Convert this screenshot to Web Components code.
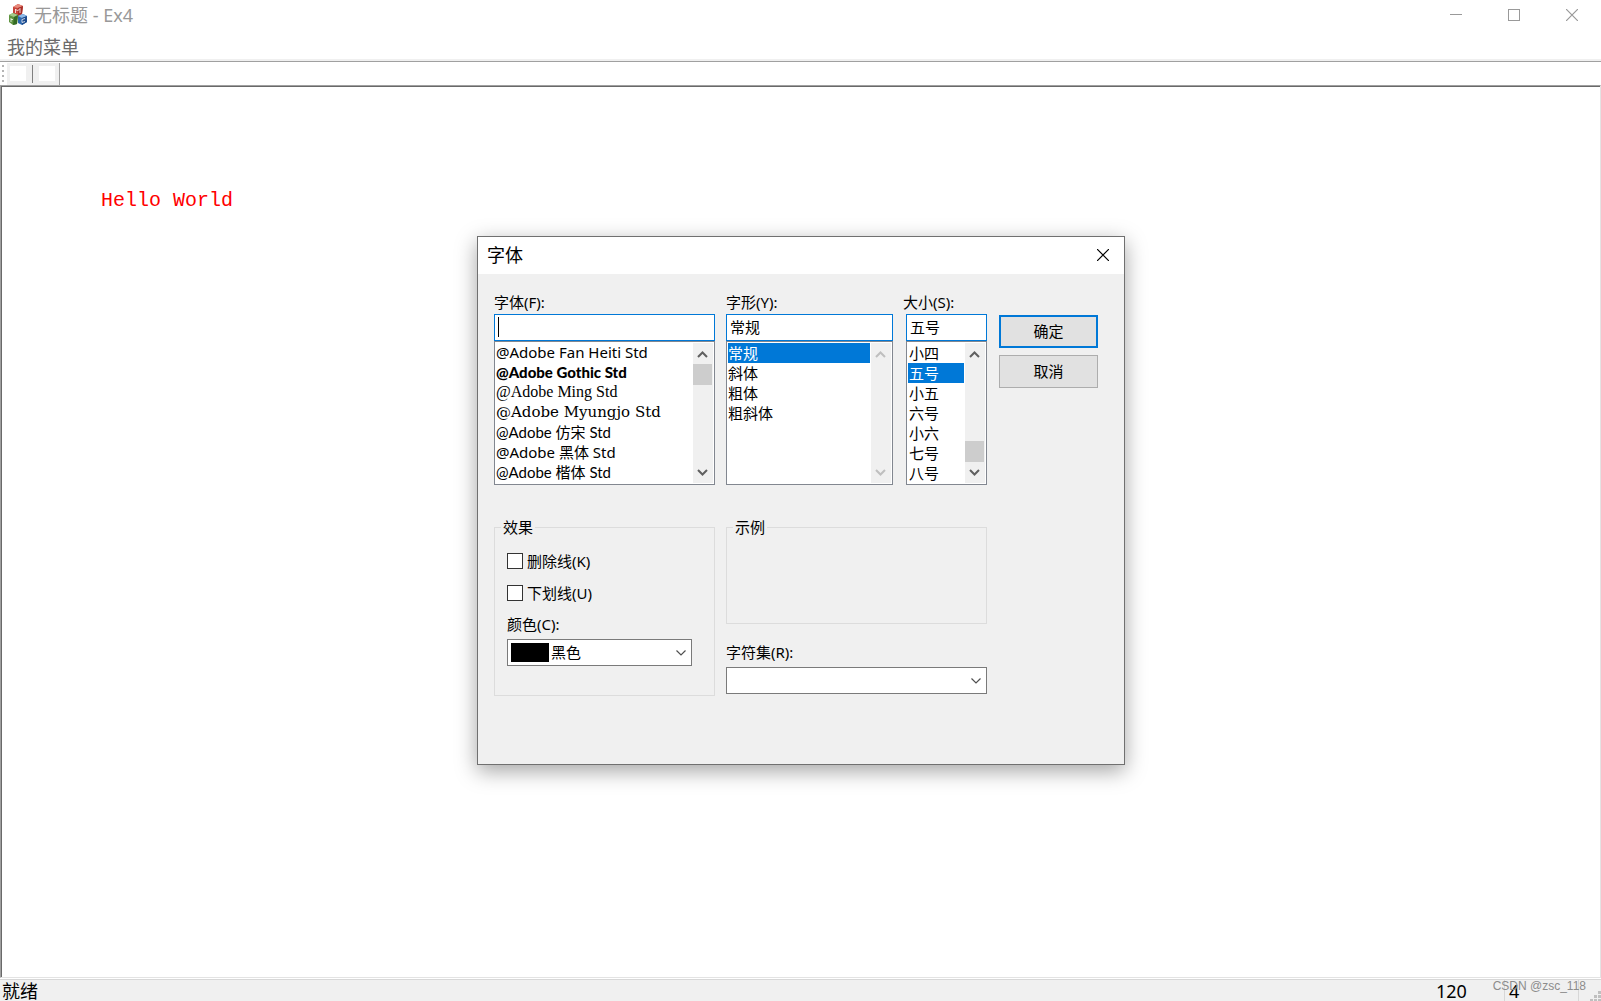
<!DOCTYPE html>
<html lang="zh-CN">
<head>
<meta charset="utf-8">
<title>无标题 - Ex4</title>
<style>
html, body { height: 100%; margin: 0; }
body { font: 15px/20px "Noto Sans", "Noto Sans CJK SC", sans-serif; color: #000; background: #fff; overflow: hidden; }
</style>
</head>
<body>
<app-window></app-window>
<script>
const define = (name, html, setup) => customElements.define(name, class extends HTMLElement {
  connectedCallback() {
    if (this.shadowRoot) return;
    const t = document.createElement('template');
    t.innerHTML = '<style>*{box-sizing:border-box}button,input,select{font:inherit;color:inherit;margin:0;border-radius:0;outline:0}</style>' +
      (typeof html === 'function' ? html(this) : html);
    this.attachShadow({ mode: 'open' }).append(t.content.cloneNode(true));
    if (setup) setup(this);
  }
});

define('title-bar', `
<style>
:host { display: flex; align-items: center; height: 30px; padding-left: 8px; font-size: 18px; line-height: 24px; color: #999; }
.name { flex: 1; padding-left: 6px; }
button { width: 58px; height: 30px; padding: 0; border: 0; background: none; display: grid; place-items: center; }
svg { display: block; }
</style>
<svg width="20" height="22" viewBox="0 0 20 22" aria-hidden="true">
  <path d="M5 3 10 0 15 2 14 10 10 12 5 10Z" fill="#c8443a"/><path d="M5 3 10 0 15 2 10 4Z" fill="#e88a7c"/><path d="M10 4 15 2 14 10 10 12Z" fill="#a82e28"/>
  <path d="M1 11 5 9 10 11 9 20 5 21 1 18Z" fill="#5f9440"/><path d="M1 11 5 9 10 11 6 13Z" fill="#a3c98a"/><path d="M6 13 10 11 9 20 5 21Z" fill="#356b24"/>
  <path d="M10 12 15 10 19 12 19 18 14 21 10 19Z" fill="#2c68b0"/><path d="M10 12 15 10 19 12 14 14Z" fill="#8db9e6"/><path d="M14 14 19 12 19 18 14 21Z" fill="#1c4a8c"/>
  <path d="M7.500 9V5L9.500 7 12 4.500V9M3 18V14M3 15.500H5M17 14.500 14 15.500V18.500L17 17.500" fill="none" stroke="#fff" stroke-width=".9" stroke-opacity=".85"/>
</svg>
<span class="name">无标题 - Ex4</span>
<button aria-label="最小化"><svg width="12" height="12"><path d="M0 5.500H12" stroke="#999"/></svg></button>
<button aria-label="最大化"><svg width="12" height="12"><rect x=".5" y=".5" width="11" height="11" fill="none" stroke="#999"/></svg></button>
<button aria-label="关闭"><svg width="12" height="12"><path d="M0 0 12 12M12 0 0 12" stroke="#999" stroke-width="1.200"/></svg></button>
`);

define('menu-bar', `
<style>
:host { display: flex; align-items: center; height: 32px; padding-left: 7px; border-bottom: 1px solid #a0a0a0; box-shadow: inset 0 -2px #f0f0f0; }
button { padding: 2px 0 0; border: 0; background: none; font-size: 18px; line-height: 24px; color: #6b6b6b; }
</style>
<button>我的菜单</button>
`);

define('tool-bar', `
<style>
:host { display: flex; align-items: flex-end; height: 23px; padding-left: 2px; }
.grip { width: 5px; height: 20px; background: radial-gradient(circle at 1px 1px, #b4b4b4 1px, #fff0 1.500px) 0 0 / 5px 5px; }
.tools { display: flex; align-items: center; gap: 6px; height: 22px; padding: 0 4px 1px 3px; background: #f0f0f0; border-right: 1px solid #a0a0a0; }
button { width: 16px; height: 15px; padding: 0; border: 0; background: #fff; }
i { width: 1px; height: 18px; background: #808080; }
</style>
<span class="grip"></span>
<div class="tools" role="toolbar"><button aria-label="工具一"></button><i></i><button aria-label="工具二"></button></div>
`);

define('doc-view', `
<style>
:host { display: block; flex: 1; border: 1px solid; border-color: #a0a0a0 #e3e3e3 #e3e3e3 #a0a0a0; }
.page { height: 100%; padding: 98px 99px; border: solid #696969; border-width: 1px 0 0 1px; }
p { margin: 0; font: 20px/32px "Liberation Mono", monospace; color: #f00; }
</style>
<div class="page"><p>Hello World</p></div>
`);

define('status-bar', `
<style>
:host { display: flex; height: 23px; border-top: 1px solid #fff; background: #f0f0f0; font-size: 18px; line-height: 24px; box-shadow: inset 0 1px #d7d7d7; overflow: hidden; }
span { padding-left: 4px; border-right: 1px solid #d7d7d7; }
.main { flex: 1; padding-left: 2px; border: 0; }
.a { width: 73px; } .b { width: 74px; }
svg { margin: 12px 0 0 11px; }
</style>
<span class="main">就绪</span><span class="a">120</span><span class="b">4</span>
<svg width="11" height="10" fill="#bfbfbf"><path d="M8 0h3v3H8zM4 4h3v3H4zM8 4h3v3H8zM0 8h3v3H0zM4 8h3v3H4zM8 8h3v3H8z"/></svg>
`);

define('scroll-strip', `
<style>
:host { display: flex; flex-direction: column; justify-content: space-between; width: 20px; background: #f0f0f0; color: #606060; }
:host([off]) { color: #bfbfbf; }
svg { display: block; width: 20px; height: 21px; fill: none; stroke: currentColor; stroke-width: 2; }
.track { flex: 1; display: flex; flex-direction: column; }
:host([end]) .track { justify-content: flex-end; }
.thumb { height: 21px; margin-right: 1px; background: #cdcdcd; }
:host([off]) .thumb { display: none; }
</style>
<svg><path d="M5 14 9.500 9.500 14 14"/></svg><div class="track"><div class="thumb"></div></div><svg><path d="M5 8 9.500 12.500 14 8"/></svg>
`);

/* Label, edit box and always-open list of one font attribute. */
define('combo-list', el => `
<style>
:host { display: block; }
label { display: block; margin-bottom: 2px; }
.edit { display: flex; align-items: center; height: 27px; padding: 0 0 2px 3px; border: 1px solid #0078d7; background: #fff; }
.edit i { width: 1px; height: 20px; background: #000; }
input { flex: 1; min-width: 0; height: 23px; padding: 0; border: 0; background: none; }
.list { display: flex; height: 144px; padding: 1px; border: 1px solid #828790; background: #fff; }
ul { flex: 1; margin: 0 1px 0 0; padding: 0; list-style: none; overflow: hidden; }
:host([inset]) .edit, :host([inset]) .list { margin-left: 3px; }
</style>
<label for="edit">${el.getAttribute('label')}</label>
<div class="edit">${el.hasAttribute('caret') ? '<i></i>' : ''}<input id="edit" value="${el.getAttribute('value') || ''}"></div>
<div class="list"><ul role="listbox" aria-label="${el.getAttribute('label')}"><slot></slot></ul>
<scroll-strip ${el.getAttribute('scroll') || ''}></scroll-strip></div>
`);

define('list-item', `
<style>
:host { display: block; height: 20px; line-height: 20px; white-space: nowrap; }
li { display: block; }
:host([selected]) { background: #0078d7; color: #fff; }
</style>
<li role="option"><slot></slot></li>
`);

define('push-button', `
<style>
:host { display: block; }
button { display: block; width: 99px; height: 33px; padding: 0 0 2px; border: 1px solid #adadad; background: #e1e1e1; }
:host([primary]) button { border: 2px solid #0078d7; }
</style>
<button><slot></slot></button>
`);

define('check-item', `
<style>
:host { display: block; }
label { display: flex; align-items: center; gap: 4px; }
input { appearance: none; width: 16px; height: 16px; border: 1px solid #333; background: #fff; }
</style>
<label><input type="checkbox"><slot></slot></label>
`);

define('drop-down', el => `
<style>
:host { display: block; }
label { display: block; margin-bottom: 5px; }
.box { display: flex; align-items: center; height: 27px; padding: 0 5px 0 3px; border: 1px solid #7a7a7a; background: #fff; }
.swatch { width: 38px; height: 19px; margin-right: 2px; background: #000; }
select { flex: 1; appearance: none; height: 25px; padding: 0 0 2px; border: 0; background: none; }
svg { fill: none; stroke: #505050; stroke-width: 1.200; }
</style>
<label for="pick">${el.getAttribute('label')}</label>
<div class="box">${el.hasAttribute('swatch') ? '<span class="swatch"></span>' : ''}
<select id="pick"><option>${el.getAttribute('value') || ''}</option></select>
<svg width="10" height="6"><path d="M.5 .5 5 5 9.500 .5"/></svg></div>
`);

define('group-box', el => `
<style>
:host { display: block; }
fieldset { height: 100%; min-width: 0; margin: 0; padding: 14px 22px 0 12px; border: 1px solid #dcdcdc; }
legend { margin-left: -6px; padding: 0 2px; }
.rows { display: flex; flex-direction: column; gap: 12px; }
::slotted(drop-down) { margin-top: -1px; }
</style>
<fieldset><legend>${el.getAttribute('label')}</legend><div class="rows"><slot></slot></div></fieldset>
`);

define('font-dialog', `
<style>
:host { display: block; width: 648px; border: 1px solid #707070; background: #f0f0f0; box-shadow: 0 6px 20px rgba(0,0,0,.36); }
header { display: flex; align-items: center; height: 37px; padding: 0 15px 2px 9px; background: #fff; }
h1 { flex: 1; margin: 0; font-size: 18px; line-height: 24px; font-weight: 400; }
header button { padding: 0; border: 0; background: none; }
header svg { display: block; }
.body { display: flex; flex-direction: column; gap: 32px; padding: 18px 27px 68px 16px; }
.row { display: flex; gap: 11px; }
.font, .effects { width: 221px; }
.style { width: 167px; }
.size { width: 84px; margin-left: -1px; }
.size list-item { padding-left: 1px; }
.actions { display: flex; flex-direction: column; gap: 7px; margin-left: 1px; padding-top: 23px; }
.effects { height: 179px; }
.right { width: 261px; display: flex; flex-direction: column; gap: 18px; }
.sample { height: 107px; }
.font list-item { line-height: 18px; }
.lato { font-family: Lato, "Noto Sans CJK SC", sans-serif; }
.heavy { font-weight: 900; }
.ming { font-family: "Liberation Serif", serif; font-size: 16px; }
.myungjo { font-family: "DejaVu Serif", serif; }
</style>
<header><h1>字体</h1><button aria-label="关闭"><svg width="12" height="12"><path d="M0 0 12 12M12 0 0 12" stroke="#000" stroke-width="1.200"/></svg></button></header>
<div class="body">
  <div class="row">
    <combo-list class="font" label="字体(F):" caret>
      <list-item>@Adobe Fan Heiti Std</list-item>
      <list-item class="lato heavy">@Adobe Gothic Std</list-item>
      <list-item class="ming">@Adobe Ming Std</list-item>
      <list-item class="myungjo">@Adobe Myungjo Std</list-item>
      <list-item class="lato">@Adobe 仿宋 Std</list-item>
      <list-item>@Adobe 黑体 Std</list-item>
      <list-item class="lato">@Adobe 楷体 Std</list-item>
    </combo-list>
    <combo-list class="style" label="字形(Y):" value="常规" scroll="off">
      <list-item selected>常规</list-item><list-item>斜体</list-item><list-item>粗体</list-item><list-item>粗斜体</list-item>
    </combo-list>
    <combo-list class="size" label="大小(S):" value="五号" scroll="end" inset>
      <list-item>小四</list-item><list-item selected>五号</list-item><list-item>小五</list-item><list-item>六号</list-item><list-item>小六</list-item><list-item>七号</list-item><list-item>八号</list-item>
    </combo-list>
    <div class="actions"><push-button primary>确定</push-button><push-button>取消</push-button></div>
  </div>
  <div class="row">
    <group-box class="effects" label="效果">
      <check-item>删除线(K)</check-item>
      <check-item>下划线(U)</check-item>
      <drop-down label="颜色(C):" value="黑色" swatch></drop-down>
    </group-box>
    <div class="right">
      <group-box class="sample" label="示例"></group-box>
      <drop-down label="字符集(R):"></drop-down>
    </div>
  </div>
</div>
`);

define('app-window', `
<style>
:host { display: flex; flex-direction: column; height: 100vh; position: relative; }
font-dialog { position: absolute; left: round(up, calc(50% - 324px), 1px); top: 236px; }
.mark { position: absolute; right: 15px; bottom: 6px; font: 12px/18px "Liberation Sans", sans-serif; color: #8c8c8c; }
</style>
<title-bar></title-bar>
<menu-bar></menu-bar>
<tool-bar></tool-bar>
<doc-view></doc-view>
<status-bar></status-bar>
<font-dialog role="dialog" aria-label="字体"></font-dialog>
<span class="mark">CSDN @zsc_118</span>
`);
</script>
</body>
</html>
